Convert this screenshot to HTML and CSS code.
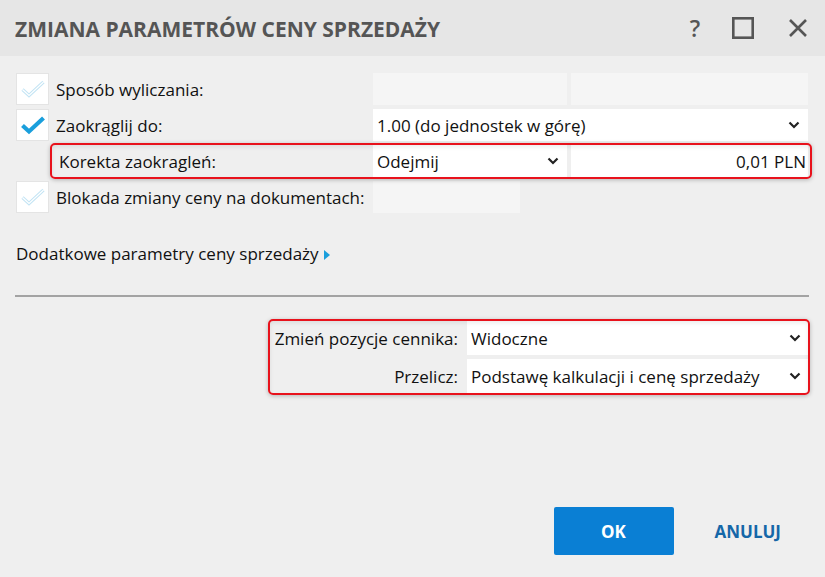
FILE: index.html
```html
<!DOCTYPE html>
<html lang="pl">
<head>
<meta charset="utf-8">
<title>Zmiana parametrów ceny sprzedaży</title>
<link rel="stylesheet" href="styles.css">
</head>
<body>
<div class="dialog">
  <header class="titlebar">
    <h1 class="title">ZMIANA PARAMETRÓW CENY SPRZEDAŻY</h1>
    <div class="tb-actions">
      <span class="tb-help">?</span>
      <svg class="tb-max" width="24" height="24" viewBox="0 0 24 24"><rect x="2.3" y="2.3" width="19.4" height="19.4" fill="none" stroke="#555" stroke-width="2.6"/></svg>
      <svg class="tb-close" width="22" height="22" viewBox="0 0 22 22"><path d="M3 3 L19 19 M19 3 L3 19" stroke="#555" stroke-width="2.6" fill="none"/></svg>
    </div>
  </header>

  <main class="content">
    <div class="form">
      <div class="row">
        <span class="check"><svg width="26" height="20" viewBox="0 0 26 20"><path d="M2.5 10.5 L9 16.5 L23.5 3" fill="none" stroke="#c3e4f4" stroke-width="3.2" stroke-linejoin="miter"/><path d="M2.5 10.5 L9 16.5 L23.5 3" fill="none" stroke="#fff" stroke-width="1.2"/></svg></span>
        <span class="label">Sposób wyliczania:</span>
        <span class="field disabled"></span>
        <span class="field disabled"></span>
      </div>
      <div class="row">
        <span class="check"><svg width="26" height="20" viewBox="0 0 26 20"><path d="M2.5 10.5 L9 16.5 L23.5 3" fill="none" stroke="#1a9fdc" stroke-width="4.2"/></svg></span>
        <span class="label">Zaokrąglij do:</span>
        <span class="field select wide">1.00 (do jednostek w górę)<svg class="chev" width="12" height="8" viewBox="0 0 12 8"><path d="M1.5 1.5 L6 6 L10.5 1.5" fill="none" stroke="#222" stroke-width="2.2"/></svg></span>
      </div>
      <div class="row marked">
        <span class="highlight"></span>
        <span class="check blank"></span>
        <span class="label">Korekta zaokragleń:</span>
        <span class="field select">Odejmij<svg class="chev" width="12" height="8" viewBox="0 0 12 8"><path d="M1.5 1.5 L6 6 L10.5 1.5" fill="none" stroke="#222" stroke-width="2.2"/></svg></span>
        <span class="field value">0,01 PLN</span>
      </div>
      <div class="row">
        <span class="check"><svg width="26" height="20" viewBox="0 0 26 20"><path d="M2.5 10.5 L9 16.5 L23.5 3" fill="none" stroke="#c3e4f4" stroke-width="3.2"/><path d="M2.5 10.5 L9 16.5 L23.5 3" fill="none" stroke="#fff" stroke-width="1.2"/></svg></span>
        <span class="label">Blokada zmiany ceny na dokumentach:</span>
        <span class="field disabled short"></span>
      </div>
    </div>

    <div class="more">Dodatkowe parametry ceny sprzedaży <svg class="tri" width="6" height="10" viewBox="0 0 6 10"><path d="M0 0 L6 5 L0 10 Z" fill="#1a9fdc"/></svg></div>

    <hr class="sep">

    <div class="form2">
      <span class="highlight2"></span>
      <span class="label2">Zmień pozycje cennika:</span>
      <span class="field select">Widoczne<svg class="chev" width="12" height="8" viewBox="0 0 12 8"><path d="M1.5 1.5 L6 6 L10.5 1.5" fill="none" stroke="#222" stroke-width="2.2"/></svg></span>
      <span class="label2">Przelicz:</span>
      <span class="field select">Podstawę kalkulacji i cenę sprzedaży<svg class="chev" width="12" height="8" viewBox="0 0 12 8"><path d="M1.5 1.5 L6 6 L10.5 1.5" fill="none" stroke="#222" stroke-width="2.2"/></svg></span>
    </div>
  </main>

  <footer class="footer">
    <button class="btn primary">OK</button>
    <button class="btn link">ANULUJ</button>
  </footer>
</div>
</body>
</html>
```

FILE: styles.css
```css
* { box-sizing: border-box; }
html, body { margin: 0; padding: 0; }
body {
  background: #efefef;
  font-family: "Open Sans", "Noto Sans", "Liberation Sans", sans-serif;
  color: #111;
}
.dialog {
  width: 825px;
  height: 577px;
  display: flex;
  flex-direction: column;
  background: #efefef;
}
.titlebar {
  height: 56px;
  background: #e6e6e6;
  display: flex;
  align-items: center;
  padding: 0 16px 0 15px;
}
.title {
  margin: 0;
  font-size: 21px;
  font-weight: 700;
  color: #555;
  letter-spacing: 0;
  flex: 1;
  padding-top: 2px;
}
.tb-actions {
  display: flex;
  align-items: center;
}
.tb-help {
  font-size: 23px;
  font-weight: 600;
  color: #555;
  width: 14px;
  text-align: center;
  margin-right: 29px;
}
.tb-close { margin-left: 32px; }
.content {
  flex: 1;
  padding: 17px 16px 0 16px;
}
.form {
  display: flex;
  flex-direction: column;
  gap: 4px;
}
.row {
  position: relative;
  display: grid;
  grid-template-columns: 33px 324px 194px 241px;
  height: 32px;
  align-items: stretch;
}
.row .field + .field { margin-left: 4px; }
.row .wide { grid-column: 3 / 5; }
.check {
  background: #fff;
  border: 1px solid #e4e4e4;
  display: flex;
  align-items: center;
  justify-content: center;
}
.check.blank { background: transparent; border: none; }
.label {
  display: flex;
  align-items: center;
  padding-left: 7px;
  font-size: 17px;
  white-space: nowrap;
}
.marked .label { padding-left: 10px; }
.field {
  position: relative;
  display: flex;
  align-items: center;
  background: #fff;
  font-size: 17px;
  padding: 0 4px;
  white-space: nowrap;
}
.field.disabled { background: #f5f5f5; }
.field.short { width: 147px; }
.field.value { justify-content: flex-end; padding-right: 2px; }
.field.select { padding-right: 30px; }
.chev { position: absolute; right: 8px; top: 50%; margin-top: -4px; }
.highlight {
  position: absolute;
  left: 34px;
  right: -3px;
  top: -2px;
  bottom: -2px;
  border: 2px solid #e8121c;
  border-radius: 5px;
  box-shadow: 0 1px 4px rgba(0,0,0,0.25), inset 0 2px 4px rgba(0,0,0,0.08);
  pointer-events: none;
  z-index: 2;
}
.more {
  margin-top: 28px;
  font-size: 17px;
  display: flex;
  align-items: center;
  gap: 5px;
  height: 24px;
}
.tri { margin-top: 3px; }
.sep {
  margin: 30px 0 0 -1px;
  border: none;
  border-top: 2px solid #a3a3a3;
  height: 0;
}
.form2 {
  position: relative;
  margin: 24px 0 0 0;
  display: grid;
  grid-template-columns: 1fr 342px;
  grid-auto-rows: 34px;
  row-gap: 4px;
}
.label2 {
  display: flex;
  align-items: center;
  justify-content: flex-end;
  padding-right: 9px;
  font-size: 17px;
  white-space: nowrap;
}
.highlight2 {
  position: absolute;
  left: 252px;
  right: -1px;
  top: -2px;
  bottom: -2px;
  border: 2px solid #e8121c;
  border-radius: 5px;
  box-shadow: 0 1px 4px rgba(0,0,0,0.25), inset 0 2px 4px rgba(0,0,0,0.08);
  pointer-events: none;
  z-index: 2;
}
.footer {
  display: flex;
  justify-content: flex-end;
  align-items: center;
  gap: 27px;
  padding: 0 30px 22px 0;
}
.btn {
  font-family: "Open Sans", "Noto Sans", sans-serif;
  font-size: 17px;
  font-weight: 700;
  border: none;
  cursor: pointer;
}
.btn.primary {
  width: 120px;
  height: 48px;
  background: #0a7fd4;
  color: #fff;
  border-radius: 2px;
}
.btn.link {
  background: transparent;
  color: #1567a8;
  height: 48px;
  padding: 0 14px;
}
```
